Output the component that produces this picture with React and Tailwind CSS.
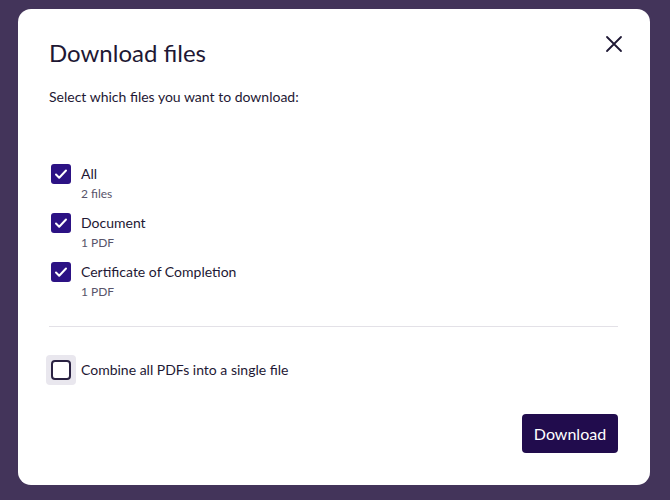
import React from 'react';

const items = [
  { label: 'All', sub: '2 files' },
  { label: 'Document', sub: '1 PDF' },
  { label: 'Certificate of Completion', sub: '1 PDF' },
];

function CheckIcon() {
  return (
    <svg width="16" height="16" viewBox="0 0 16 16" fill="none">
      <path d="M3 8.5l3.2 3.2L13 4.5" stroke="white" strokeWidth="2" strokeLinecap="round" strokeLinejoin="round" />
    </svg>
  );
}

export default function App() {
  return (
    <div className="w-[670px] h-[500px] bg-[#43345a] pt-[9px] pl-[18px] font-['Lato',sans-serif] text-[#1e1834]">
      <div className="relative w-[632px] h-[476px] bg-white rounded-[13px] pl-[31px] pr-[32px] pt-[28px] flex flex-col">
        <button className="absolute top-[19px] right-[20px] w-[32px] h-[32px] flex items-center justify-center">
          <svg width="18" height="18" viewBox="0 0 18 18" fill="none">
            <path d="M2 2l14 14M16 2L2 16" stroke="#1e1834" strokeWidth="1.8" strokeLinecap="round" />
          </svg>
        </button>

        <h2 className="text-[24px] leading-[32px]">Download files</h2>
        <p className="mt-[18px] text-[14px] leading-[20px]">Select which files you want to download:</p>

        <div className="mt-[57px] flex flex-col gap-[11px]">
          {items.map((it) => (
            <div key={it.label} className="flex items-start">
              <div className="-ml-[3px] w-[30px] h-[20px] flex items-center justify-center">
                <span className="w-[20px] h-[20px] rounded-[3px] bg-[#2c1284] flex items-center justify-center">
                  <CheckIcon />
                </span>
              </div>
              <div className="ml-[5px] flex flex-col">
                <span className="text-[14px] leading-[20px]">{it.label}</span>
                <span className="mt-[2px] text-[12px] leading-[16px] text-[#58546a]">{it.sub}</span>
              </div>
            </div>
          ))}
        </div>

        <div className="mt-[26px] h-px bg-[#e3e1e7]" />

        <div className="mt-[28px] flex items-center">
          <div className="-ml-[3px] w-[30px] h-[30px] rounded-[4px] bg-[#e9e7ee] flex items-center justify-center">
            <span className="w-[20px] h-[20px] rounded-[4px] border-2 border-[#2a2242] bg-white" />
          </div>
          <span className="ml-[5px] text-[14px] leading-[20px]">Combine all PDFs into a single file</span>
        </div>

        <div className="mt-[29px] flex justify-end">
          <button className="w-[96px] h-[39px] rounded-[4px] bg-[#210c4d] text-white text-[16px]">Download</button>
        </div>
      </div>
    </div>
  );
}
